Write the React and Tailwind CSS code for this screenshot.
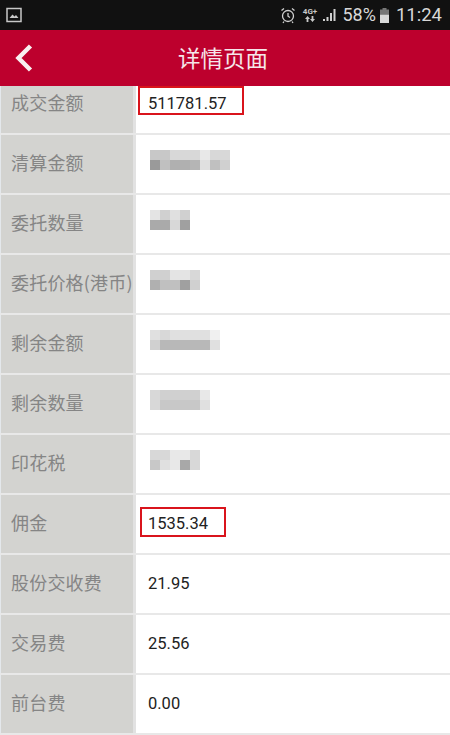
const rows = [
  { label: '成交金额', value: '511781.57', box: 'left-[2px] top-[11px] w-[106px] h-[29px]' },
  { label: '清算金额', top: ['c8', 'c8', 'd8', 'd8', 'd8', 'e8', 'd8', 'd8'], bottom: ['9a', 'c0', 'b0', 'b0', 'b5', 'e0', 'c0', 'd0'] },
  { label: '委托数量', top: ['e4', 'd0', 'e0', 'd0'], bottom: ['aa', 'aa', 'd8', 'a0'] },
  { label: '委托价格(港币)', top: ['d0', 'd0', 'e4', 'e4', 'd8'], bottom: ['b0', 'c0', 'c0', 'a0', 'd0'] },
  { label: '剩余金额', top: ['e0', 'd8', 'e0', 'e0', 'e0', 'e0', 'f0'], bottom: ['d0', 'b8', 'b8', 'b8', 'b8', 'b8', 'e0'] },
  { label: '剩余数量', top: ['d8', 'd0', 'd0', 'd0', 'd0', 'e8'], bottom: ['d8', 'c8', 'c8', 'c8', 'c8', 'e0'] },
  { label: '印花税', top: ['d8', 'd8', 'e8', 'e8', 'd8'], bottom: ['c8', 'e0', 'e8', 'a8', 'd8'] },
  { label: '佣金', value: '1535.34', box: 'left-[4px] top-[12px] w-[86px] h-[30px]' },
  { label: '股份交收费', value: '21.95' },
  { label: '交易费', value: '25.56' },
  { label: '前台费', value: '0.00' },
];

function Pixels({ top, bottom }) {
  return (
    <div className="mb-2 ml-[2px] flex flex-col">
      {[top, bottom].map((line, i) => (
        <div key={i} className="flex">
          {line.map((c, j) => (
            <span key={j} className="block h-[10px] w-[10px]" style={{ backgroundColor: `#${c}${c}${c}` }} />
          ))}
        </div>
      ))}
    </div>
  );
}

function StatusBar() {
  return (
    <div className="flex h-[30px] items-center justify-between bg-[#111111] pl-[6px] pr-[8px] text-[#d8d8d8]">
      <svg width="16" height="16" viewBox="0 0 16 16" fill="none">
        <rect x="1" y="1.5" width="14" height="13" stroke="#c8c8c8" strokeWidth="1.5" />
        <path d="M3.5 11 6.5 7.5 8.5 9.5 10 8 12.5 11Z" fill="#c8c8c8" />
      </svg>
      <div className="flex items-center">
        {/* alarm */}
        <svg width="16" height="18" viewBox="0 0 16 18" fill="none" stroke="#d0d0d0" strokeWidth="1.3">
          <circle cx="8" cy="10" r="5.5" />
          <path d="M8 7v3.2l2 1.3M1.5 4.5 4 2.5M14.5 4.5 12 2.5M4 15.5l-1 1.5M12 15.5l1 1.5" />
        </svg>
        {/* 4G+ */}
        <div className="ml-[6px] flex w-[17px] flex-col items-center font-['Roboto',sans-serif] text-[8px] font-bold leading-[8px] text-[#c8c8c8]">
          <span>4G+</span>
          <svg width="10" height="6" viewBox="0 0 10 6" fill="#c8c8c8">
            <path d="M2.5 0 5 3H3.4v3H1.6V3H0ZM7.5 6 5 3h1.6V0h1.8v3H10Z" />
          </svg>
        </div>
        {/* signal */}
        <svg className="ml-[4px]" width="14" height="14" viewBox="0 0 14 14" fill="#d0d0d0">
          <rect x="0" y="11" width="2" height="2" />
          <rect x="3.5" y="9" width="2" height="4" />
          <rect x="7" y="5" width="2" height="8" />
          <rect x="10.5" y="1" width="2" height="12" />
        </svg>
        <span className="ml-[6px] font-['Roboto',sans-serif] text-[18px] leading-none">58%</span>
        {/* battery */}
        <svg className="ml-[4px]" width="9" height="15" viewBox="0 0 9 15">
          <rect x="2.5" y="0" width="4" height="2" fill="#777777" />
          <rect x="0" y="1.5" width="9" height="5" fill="#777777" />
          <rect x="0" y="6.5" width="9" height="8.5" fill="#d8d8d8" />
        </svg>
        <span className="ml-[7px] font-['Roboto',sans-serif] text-[18.5px] leading-none">11:24</span>
      </div>
    </div>
  );
}

function Row({ row }) {
  return (
    <div className="flex h-[60px] border-b-2 border-[#e8e8e8]">
      <div className="flex w-[133px] shrink-0 items-center whitespace-nowrap border-l border-[#e4e8ec] bg-[#d3d3d0] pb-[3px] pl-[10px] text-[18px] tracking-[0.2px] text-[#858585]">
        {row.label}
      </div>
      <div className="w-[3px] shrink-0 bg-[#e2e2e2]" />
      <div className="relative flex flex-1 items-center bg-white pl-[12px] font-['Roboto',sans-serif] text-[16.5px] text-[#222222]">
        {row.top ? <Pixels top={row.top} bottom={row.bottom} /> : row.value}
        {row.box && <div className={`absolute border-2 border-[#d9141c] ${row.box}`} />}
      </div>
    </div>
  );
}

export default function App() {
  return (
    <div className="flex h-[735px] w-[450px] flex-col overflow-hidden bg-white font-['Noto_Sans_CJK_SC','Noto_Sans',sans-serif]">
      <StatusBar />
      <header className="relative z-10 flex h-[56px] shrink-0 items-center justify-center bg-[#bd002d] text-[22.5px] text-[#f6e6ea]">
        <svg className="absolute left-[15px] top-[14px]" width="18" height="28" viewBox="0 0 18 28" fill="none" stroke="#f8f0f0" strokeWidth="4.5">
          <path d="M15.5 2 3.5 14l12 12" />
        </svg>
        <span className="ml-[-4px]">详情页面</span>
      </header>
      <div className="flex-1 overflow-hidden">
        <div className="-mt-[11px]">
          {rows.map(row => (
            <Row key={row.label} row={row} />
          ))}
        </div>
      </div>
    </div>
  );
}
